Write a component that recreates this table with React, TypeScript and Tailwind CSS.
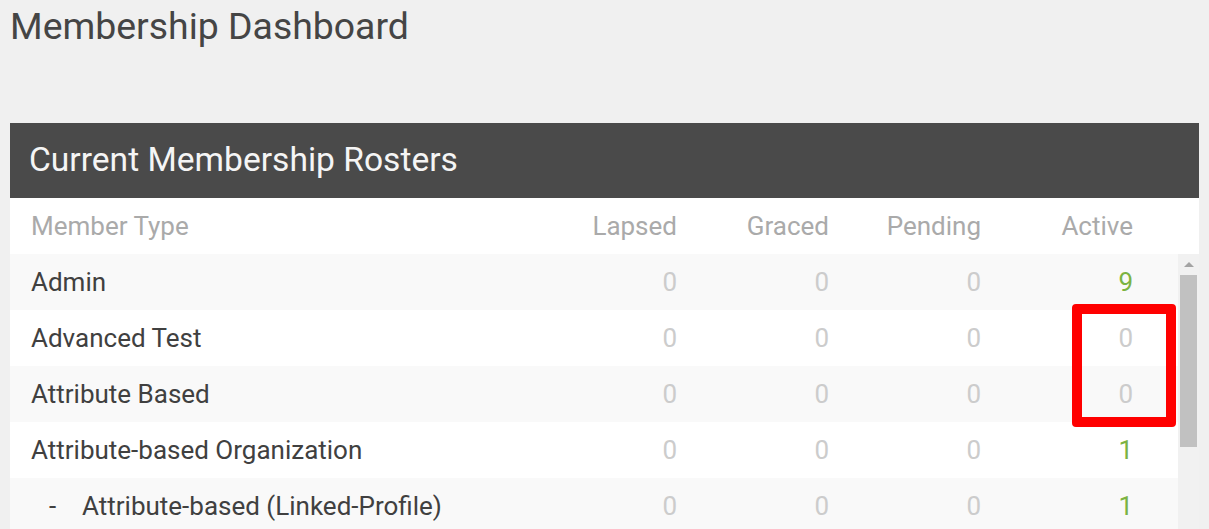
import React from "react";

type Row = { name: string; sub?: boolean; v: [number, number, number, number] };

const rows: Row[] = [
  { name: "Admin", v: [0, 0, 0, 9] },
  { name: "Advanced Test", v: [0, 0, 0, 0] },
  { name: "Attribute Based", v: [0, 0, 0, 0] },
  { name: "Attribute-based Organization", v: [0, 0, 0, 1] },
  { name: "Attribute-based (Linked-Profile)", sub: true, v: [0, 0, 0, 1] },
  { name: "Basic", v: [0, 0, 0, 2] },
];

export default function App() {
  return (
    <div
      className="relative h-[529px] w-[1209px] overflow-hidden bg-[#f0f0f0]"
      style={{ fontFamily: "Roboto, 'Liberation Sans', sans-serif" }}
    >
      <h1 className="pl-[10px] pt-[4px] text-[37.4px] font-normal leading-[44px] text-[#454545]">
        Membership Dashboard
      </h1>

      <div className="ml-[10px] mt-[75px] w-[1189px]">
        <div className="flex h-[75px] items-center bg-[#4a4a4a] pl-[19px] text-[33.6px] text-[#f5f5f5]">
          Current Membership Rosters
        </div>
        <div className="flex h-[56px] items-center bg-white pr-[66px] text-[26px] text-[#aaaaaa]">
          <div className="flex-1 pl-[21px]">Member Type</div>
          <div className="w-[152px] text-right">Lapsed</div>
          <div className="w-[152px] text-right">Graced</div>
          <div className="w-[152px] text-right">Pending</div>
          <div className="w-[152px] text-right">Active</div>
        </div>
        <div className="flex">
          <div className="flex-1">
            {rows.map((r, i) => (
              <div
                key={r.name}
                className={`flex h-[56px] items-center pr-[45px] text-[26px] ${
                  i % 2 === 0 ? "bg-[#f9f9f9]" : "bg-white"
                }`}
              >
                <div className="flex flex-1 items-center pl-[21px] text-[#404040]">
                  {r.sub ? (
                    <>
                      <span className="w-[51px] pl-[18px]">-</span>
                      <span>{r.name}</span>
                    </>
                  ) : (
                    r.name
                  )}
                </div>
                {r.v.map((n, j) => (
                  <div
                    key={j}
                    className={`w-[152px] text-right ${
                      n > 0 ? "text-[#7cb342]" : "text-[#cccccc]"
                    }`}
                  >
                    {n}
                  </div>
                ))}
              </div>
            ))}
          </div>
          <div className="relative h-[300px] w-[21px] bg-[#f1f1f1]">
            <div className="flex h-[21px] items-start justify-center pt-[8px]">
              <div className="h-0 w-0 border-x-[5px] border-b-[5px] border-x-transparent border-b-[#a3a3a3]" />
            </div>
            <div className="ml-[2px] h-[172px] w-[17px] bg-[#c1c1c1]" />
          </div>
        </div>
      </div>

      <div className="absolute left-[1072px] top-[304px] h-[123px] w-[104px] rounded-[4px] border-[10px] border-[#ff0000]" />
    </div>
  );
}
